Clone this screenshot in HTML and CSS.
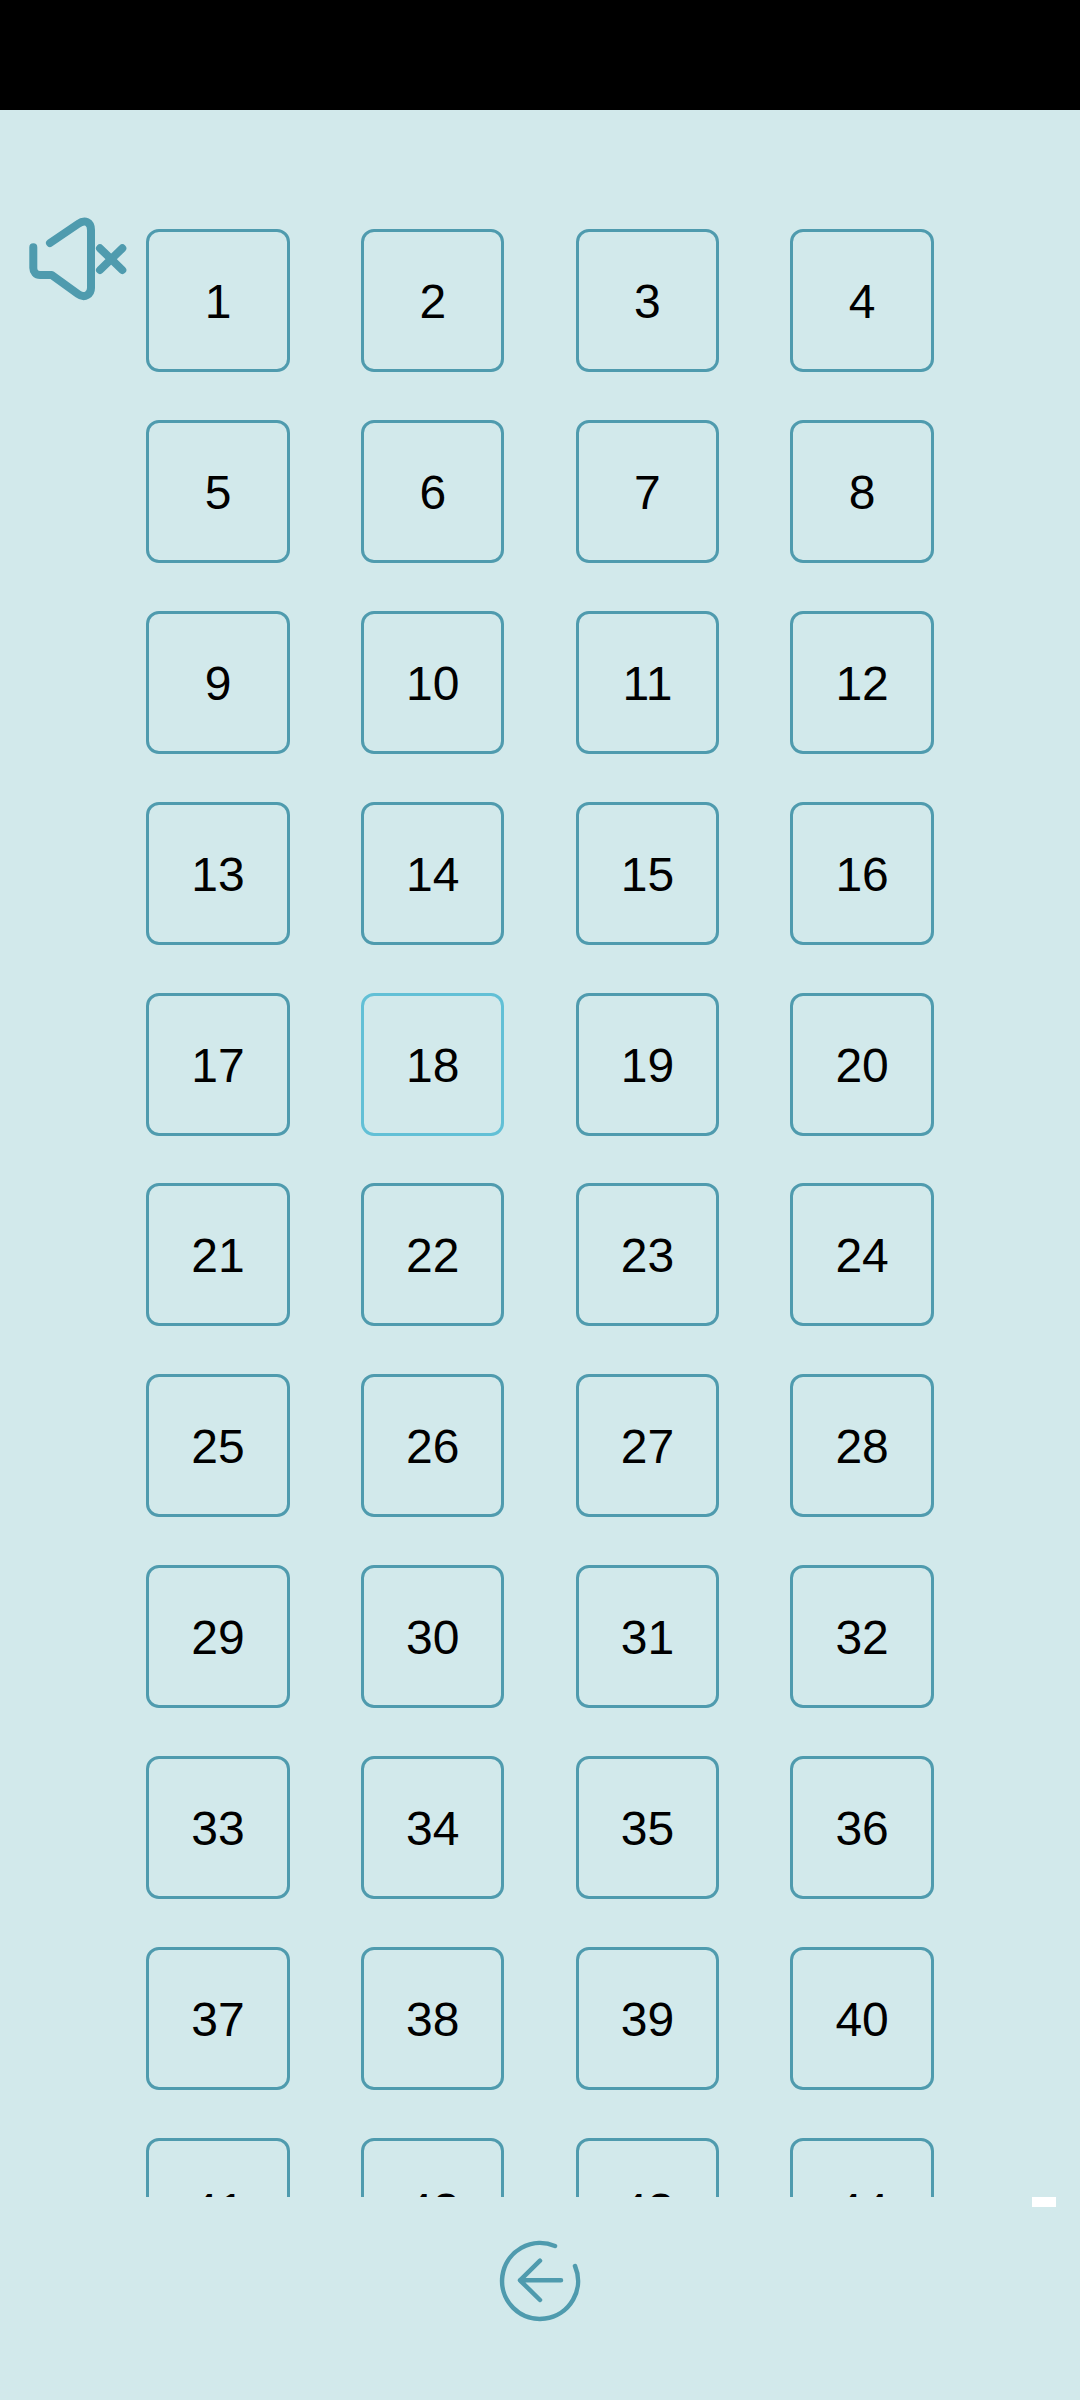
FILE: index.html
```html
<!DOCTYPE html>
<html lang="en">
    <head>
        <meta charset="utf-8" />
        <meta name="viewport" content="width=device-width, initial-scale=1" />
        <title>Levels</title>
        <link rel="stylesheet" href="styles.css">
    </head>
    <body>
        <div class="statusbar"></div>
        <main class="screen">
            <button class="mute" aria-label="Sound off">
                <svg xmlns="http://www.w3.org/2000/svg" viewBox="0 0 120 100" width="120" height="100">
                    <path class="icon-line thick" d="M30 33 L58 14 C65 9 71 12 71 20 L71 78 C71 84 65 89 58 84 L31.700 65 L20 65 C16 65 13.300 62 13.300 58 L13.300 37.300"/>
                    <path class="icon-line thick" d="M80 38.300 L102.300 60 M102.300 38.300 L80 60"/>
                </svg>
            </button>
            <section class="levels">
                <div class="level">1</div>
                <div class="level">2</div>
                <div class="level">3</div>
                <div class="level">4</div>
                <div class="level">5</div>
                <div class="level">6</div>
                <div class="level">7</div>
                <div class="level">8</div>
                <div class="level">9</div>
                <div class="level">10</div>
                <div class="level">11</div>
                <div class="level">12</div>
                <div class="level">13</div>
                <div class="level">14</div>
                <div class="level">15</div>
                <div class="level">16</div>
                <div class="level">17</div>
                <div class="level current">18</div>
                <div class="level">19</div>
                <div class="level">20</div>
                <div class="level">21</div>
                <div class="level">22</div>
                <div class="level">23</div>
                <div class="level">24</div>
                <div class="level">25</div>
                <div class="level">26</div>
                <div class="level">27</div>
                <div class="level">28</div>
                <div class="level">29</div>
                <div class="level">30</div>
                <div class="level">31</div>
                <div class="level">32</div>
                <div class="level">33</div>
                <div class="level">34</div>
                <div class="level">35</div>
                <div class="level">36</div>
                <div class="level">37</div>
                <div class="level">38</div>
                <div class="level">39</div>
                <div class="level">40</div>
                <div class="level">41</div>
                <div class="level">42</div>
                <div class="level">43</div>
                <div class="level">44</div>
            </section>
            <div class="scroll-thumb"></div>
            <footer class="bottom">
                <button class="back" aria-label="Back">
                    <svg xmlns="http://www.w3.org/2000/svg" viewBox="0 0 100 100" width="100" height="100">
                        <path class="icon-line" d="M65 16 A38 38 0 1 0 85 36"/>
                        <path class="icon-line" d="M50 30.700 L30 50.300 L50 70 M30 50.300 L71 50.300"/>
                    </svg>
                </button>
            </footer>
        </main>
    </body>
</html>
```

FILE: styles.css
```css
*{ margin:0; padding:0; box-sizing:border-box; }
html, body{ height:100%; }
body{ display:flex;
    flex-direction:column;
    background-color:#d2e9eb;
    color:#000;
    font-family:"Liberation Sans", Arial, sans-serif; }

.statusbar{ height:110px; background-color:#000; flex:none; }

.screen{ position:relative; flex:1; display:flex; flex-direction:column; min-height:0; }

.mute{ position:absolute; left:20px; top:100px; background:none; border:0; line-height:0; }

.levels{ height:2087px;
    overflow:hidden;
    flex:none;
    padding:119px 0 0 146.3px;
    display:grid;
    grid-template-columns:repeat(4, 143.5px);
    grid-auto-rows:143px;
    column-gap:71.2px;
    row-gap:47.9px; }

.level{ display:flex;
    align-items:center;
    justify-content:center;
    padding-top:2px;
    border:3px solid #4f9bae;
    border-radius:13px;
    font-size:48px; }
.level.current{ border-color:#62c0d6; }

.scroll-thumb{ position:absolute; left:1032px; top:2087px; width:24px; height:10px; background-color:#fff; }

.bottom{ flex:1; display:flex; justify-content:center; align-items:flex-start; padding-top:33px; }
.back{ background:none; border:0; line-height:0; }

.icon-line{ fill:none; stroke:#4f9bae; stroke-width:4.5; stroke-linecap:round; stroke-linejoin:round; }
.icon-line.thick{ stroke-width:8; }
```
